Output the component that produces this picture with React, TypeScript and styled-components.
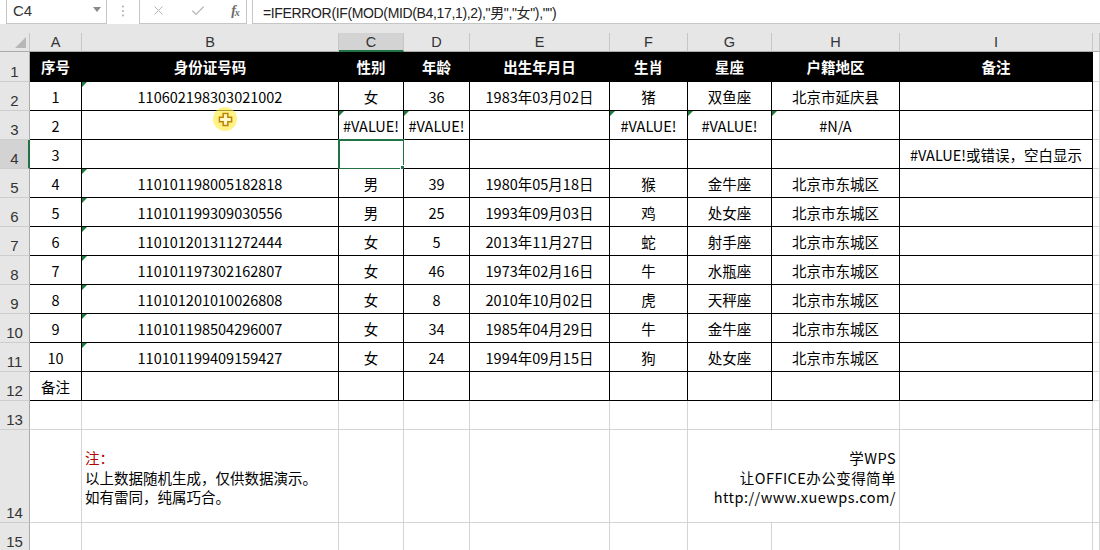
import { X, Check } from "lucide-react";
import styled, { createGlobalStyle, css } from "styled-components";

const GlobalStyle = createGlobalStyle`
  html, body {
    margin: 0;
    padding: 0;
    background: #fff;
    overflow: hidden;
  }
  body {
    font-family: "Noto Sans CJK SC", "Noto Sans", sans-serif;
    color: #000;
  }
`;

const COLS = ["A", "B", "C", "D", "E", "F", "G", "H", "I"];
const HEAD = ["序号", "身份证号码", "性别", "年龄", "出生年月日", "生肖", "星座", "户籍地区", "备注"];

// sheet rows 2..12
const DATA: string[][] = [
  ["1", "110602198303021002", "女", "36", "1983年03月02日", "猪", "双鱼座", "北京市延庆县", ""],
  ["2", "", "#VALUE!", "#VALUE!", "", "#VALUE!", "#VALUE!", "#N/A", ""],
  ["3", "", "", "", "", "", "", "", "#VALUE!或错误，空白显示"],
  ["4", "110101198005182818", "男", "39", "1980年05月18日", "猴", "金牛座", "北京市东城区", ""],
  ["5", "110101199309030556", "男", "25", "1993年09月03日", "鸡", "处女座", "北京市东城区", ""],
  ["6", "110101201311272444", "女", "5", "2013年11月27日", "蛇", "射手座", "北京市东城区", ""],
  ["7", "110101197302162807", "女", "46", "1973年02月16日", "牛", "水瓶座", "北京市东城区", ""],
  ["8", "110101201010026808", "女", "8", "2010年10月02日", "虎", "天秤座", "北京市东城区", ""],
  ["9", "110101198504296007", "女", "34", "1985年04月29日", "牛", "金牛座", "北京市东城区", ""],
  ["10", "110101199409159427", "女", "24", "1994年09月15日", "狗", "处女座", "北京市东城区", ""],
  ["备注", "", "", "", "", "", "", "", ""],
];

// green error markers: sheet row -> column indexes
const FLAGS: Record<number, number[]> = {
  2: [1],
  3: [2, 3, 5, 6, 7],
  5: [1],
  6: [1],
  7: [1],
  8: [1],
  9: [1],
  10: [1],
  11: [1],
};

const ACTIVE_ROW = 4;
const ACTIVE_COL = 2;

export default function App() {
  return (
    <Page>
      <GlobalStyle />
      <FormulaBar>
        <NameBox>
          <NameText>C4</NameText>
          <Caret />
        </NameBox>
        <Grip>
          <svg width="4" height="14" viewBox="0 0 4 14">
            <circle cx="2" cy="2.5" r="1.1" fill="#b5b5b5" />
            <circle cx="2" cy="7" r="1.1" fill="#b5b5b5" />
            <circle cx="2" cy="11.5" r="1.1" fill="#b5b5b5" />
          </svg>
        </Grip>
        <FxBox>
          <FxButton>
            <X size={15} strokeWidth={1.6} color="#b4b4b4" />
          </FxButton>
          <FxButton>
            <Check size={16} strokeWidth={1.8} color="#b4b4b4" />
          </FxButton>
          <FxButton>
            <FxMark>
              f<sub>x</sub>
            </FxMark>
          </FxButton>
        </FxBox>
        <FormulaBox>=IFERROR(IF(MOD(MID(B4,17,1),2),"男","女"),"")</FormulaBox>
      </FormulaBar>
      <HeaderGap />
      <Sheet>
        <Corner>
          <CornerMark />
        </Corner>
        {COLS.map((c, i) => (
          <ColHead key={c} $active={i === ACTIVE_COL}>
            {c}
          </ColHead>
        ))}
        <ColHead $active={false} />

        <RowHead $active={false}>1</RowHead>
        {HEAD.map((h) => (
          <Cell key={h} $tone="head">
            {h}
          </Cell>
        ))}
        <Cell $tone="plain" />

        {DATA.map((row, r) => {
          const n = r + 2;
          const flags = FLAGS[n] || [];
          return [
            <RowHead key={`h${n}`} $active={n === ACTIVE_ROW}>
              {n}
            </RowHead>,
            ...row.map((v, c) => (
              <Cell key={`${n}-${c}`} $tone="data" $flag={flags.includes(c)}>
                {v}
                {n === 3 && c === 1 && (
                  <Cursor>
                    <svg width="15" height="15" viewBox="0 0 16 16">
                      <path
                        d="M5.5 1.5h5v4h4v5h-4v4h-5v-4h-4v-5h4z"
                        fill="#fff8cf"
                        stroke="#c08300"
                        strokeWidth="1.6"
                        strokeLinejoin="miter"
                      />
                    </svg>
                  </Cursor>
                )}
                {n === ACTIVE_ROW && c === ACTIVE_COL && (
                  <Selection>
                    <Handle />
                  </Selection>
                )}
              </Cell>
            )),
            <Cell key={`x${n}`} $tone="plain" />,
          ];
        })}

        <RowHead $active={false}>13</RowHead>
        {COLS.map((c) => (
          <Cell key={`13${c}`} $tone="plain" />
        ))}
        <Cell $tone="plain" />

        <RowHead $active={false}>14</RowHead>
        <Cell $tone="plain" />
        <Cell $tone="plain" $align="left">
          <Note $right={false}>
            <NoteTitle>注：</NoteTitle>
            <div>以上数据随机生成，仅供数据演示。</div>
            <div>如有雷同，纯属巧合。</div>
          </Note>
        </Cell>
        <Cell $tone="plain" />
        <Cell $tone="plain" />
        <Cell $tone="plain" />
        <Cell $tone="plain" />
        <Cell $tone="plain" $align="right" $span={2}>
          <Note $right>
            <div>学WPS</div>
            <div>让OFFICE办公变得简单</div>
            <div>http://www.xuewps.com/</div>
          </Note>
        </Cell>
        <Cell $tone="plain" />
        <Cell $tone="plain" />

        <RowHead $active={false}>15</RowHead>
        {COLS.map((c) => (
          <Cell key={`15${c}`} $tone="plain" />
        ))}
        <Cell $tone="plain" />
      </Sheet>
    </Page>
  );
}

const GREEN = "#217346";
const GRID = "#d4d4d4";

const Page = styled.div`
  width: 1100px;
  height: 550px;
  overflow: hidden;
  display: flex;
  flex-direction: column;
  & > * {
    flex-shrink: 0;
  }
`;

const FormulaBar = styled.div`
  display: flex;
  align-items: stretch;
  height: 24px;
  padding-left: 6px;
  background: #fff;
`;

const boxStyle = css`
  box-sizing: border-box;
  border: 1px solid #c6c6c6;
  border-top: none;
  background: #fff;
`;

const NameBox = styled.div`
  ${boxStyle};
  width: 101px;
  display: flex;
  align-items: center;
  justify-content: space-between;
  padding: 0 5px 0 6px;
`;

const NameText = styled.span`
  font-family: "Liberation Sans", sans-serif;
  font-size: 15px;
  color: #333;
  margin-top: -2px;
`;

const Caret = styled.span`
  width: 0;
  height: 0;
  border-left: 4px solid transparent;
  border-right: 4px solid transparent;
  border-top: 5px solid #8a8a8a;
  margin-top: -4px;
`;

const Grip = styled.div`
  width: 32px;
  display: flex;
  align-items: center;
  justify-content: center;
  margin-top: -3px;
`;

const FxBox = styled.div`
  ${boxStyle};
  width: 108px;
  display: flex;
  align-items: center;
  justify-content: space-between;
  padding: 0 3px 0 10px;
`;

const FxButton = styled.span`
  display: flex;
  align-items: center;
  justify-content: center;
  width: 16px;
  height: 16px;
  margin-top: -2px;
  &:nth-child(2) {
    margin-left: 2px;
  }
`;

const FxMark = styled.span`
  font-family: "Liberation Serif", serif;
  font-style: italic;
  font-weight: bold;
  font-size: 14px;
  color: #6b6b6b;
  letter-spacing: -1px;
  sub {
    font-size: 10px;
    vertical-align: -1px;
  }
`;

const FormulaBox = styled.div`
  ${boxStyle};
  flex: 1;
  margin-left: 5px;
  margin-right: -1px;
  padding-left: 10px;
  display: flex;
  align-items: center;
  font-family: "Liberation Sans", "Noto Sans CJK SC", sans-serif;
  font-size: 14px;
  letter-spacing: -0.35px;
  color: #222;
  white-space: nowrap;
`;

const HeaderGap = styled.div`
  height: 9px;
  background: #e6e6e6;
`;

const Sheet = styled.div`
  display: grid;
  grid-template-columns: 30px 52px 257px 65px 66px 140px 78px 84px 128px 193px 1fr;
  grid-template-rows: 19px 30px repeat(12, 29px) 93px 29px;
`;

const Corner = styled.div`
  box-sizing: border-box;
  background: #e6e6e6;
  border-right: 1px solid #c6c6c6;
  border-bottom: 1px solid #ababab;
  display: flex;
  align-items: flex-end;
  justify-content: flex-end;
  padding: 0 3px 3px 0;
`;

const CornerMark = styled.span`
  width: 0;
  height: 0;
  border-left: 11px solid transparent;
  border-bottom: 11px solid #b7b7b7;
`;

const ColHead = styled.div<{ $active: boolean }>`
  box-sizing: border-box;
  display: flex;
  align-items: center;
  justify-content: center;
  font-family: "Liberation Sans", sans-serif;
  font-size: 14.5px;
  color: #333;
  background: ${({ $active }) => ($active ? "#d3d3d3" : "#e6e6e6")};
  border-right: 1px solid #c6c6c6;
  border-bottom: ${({ $active }) => ($active ? `2px solid ${GREEN}` : "1px solid #ababab")};
  padding-top: ${({ $active }) => ($active ? "1px" : "0")};
`;

const RowHead = styled.div<{ $active: boolean }>`
  box-sizing: border-box;
  display: flex;
  align-items: flex-end;
  justify-content: center;
  font-family: "Liberation Sans", sans-serif;
  font-size: 15px;
  line-height: 17px;
  color: #333;
  background: ${({ $active }) => ($active ? "#d3d3d3" : "#e6e6e6")};
  border-bottom: 1px solid #cdcdcd;
  border-right: ${({ $active }) => ($active ? `2px solid ${GREEN}` : "1px solid #ababab")};
  padding: ${({ $active }) => ($active ? "0 0 1px 1px" : "0 0 1px")};
`;

type Tone = "head" | "data" | "plain";

const Cell = styled.div<{ $tone: Tone; $flag?: boolean; $align?: "left" | "right"; $span?: number }>`
  position: relative;
  box-sizing: border-box;
  display: flex;
  align-items: center;
  justify-content: ${({ $align }) =>
    $align === "left" ? "flex-start" : $align === "right" ? "flex-end" : "center"};
  padding: 0 3px;
  white-space: nowrap;
  font-size: 14.5px;
  grid-column: ${({ $span }) => ($span ? `span ${$span}` : "auto")};
  border-right: 1px solid ${({ $tone }) => ($tone === "plain" ? GRID : "#000")};
  border-bottom: 1px solid ${({ $tone }) => ($tone === "plain" ? GRID : "#000")};
  background: ${({ $tone }) => ($tone === "head" ? "#000" : "#fff")};
  color: ${({ $tone }) => ($tone === "head" ? "#fff" : "#000")};
  font-weight: ${({ $tone }) => ($tone === "head" ? 700 : 400)};

  ${({ $flag }) =>
    $flag &&
    css`
      &::before {
        content: "";
        position: absolute;
        left: 0;
        top: 0;
        border-top: 5px solid #1e7b3c;
        border-right: 5px solid transparent;
      }
    `}
`;

const Note = styled.div<{ $right: boolean }>`
  line-height: 19.5px;
  padding-top: 3px;
  text-align: ${({ $right }) => ($right ? "right" : "left")};
  letter-spacing: ${({ $right }) => ($right ? "0.45px" : "0")};
`;

const NoteTitle = styled.div`
  color: #b00000;
`;

const Selection = styled.div`
  position: absolute;
  left: -1px;
  top: -1px;
  right: -2px;
  bottom: -2px;
  border: 2px solid ${GREEN};
  pointer-events: none;
`;

const Handle = styled.span`
  position: absolute;
  right: -5px;
  bottom: -5px;
  width: 6px;
  height: 6px;
  background: ${GREEN};
  border: 1px solid #fff;
`;

const Cursor = styled.div`
  position: absolute;
  left: 131px;
  top: -4px;
  width: 24px;
  height: 24px;
  border-radius: 50%;
  background: rgba(255, 236, 70, 0.65);
  display: flex;
  align-items: center;
  justify-content: center;
`;
